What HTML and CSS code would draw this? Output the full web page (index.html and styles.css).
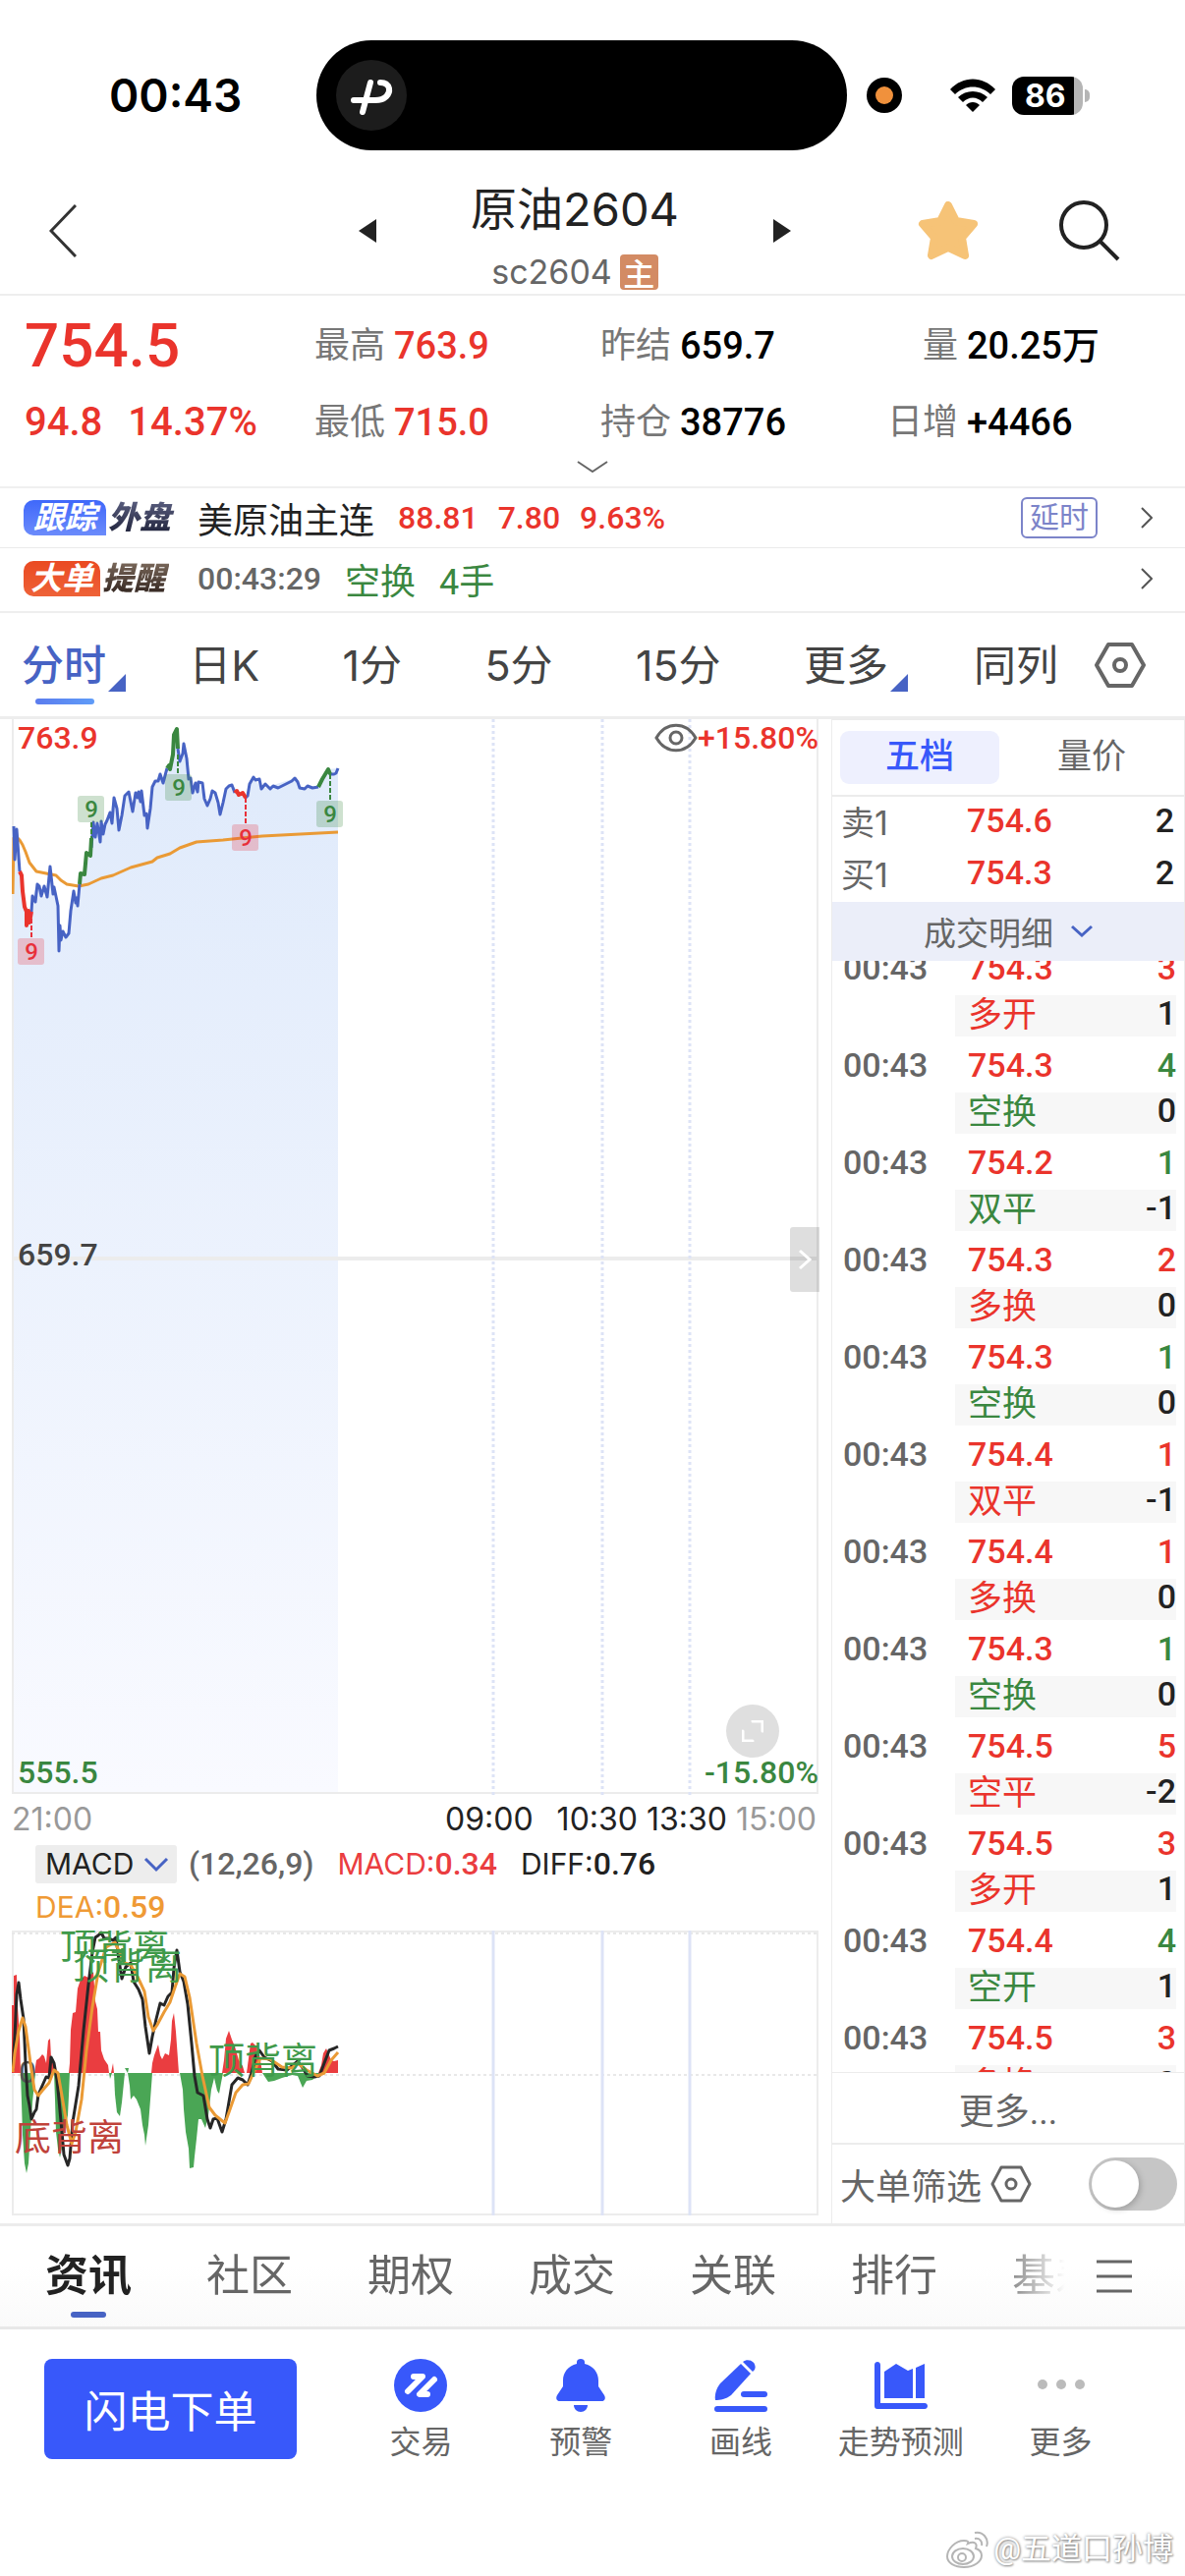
FILE: index.html
```html
<!DOCTYPE html>
<html lang="zh-CN">
<head>
  <meta charset="UTF-8">
  <meta name="viewport" content="width=device-width, initial-scale=1">
  <title>原油2604</title>
  <link rel="stylesheet" href="styles.css">
</head>
<body>
  <!-- 状态栏 -->
  <div class="status-bar">
    <span class="clock">00:43</span>
    <div class="island">
      <svg class="island-icon" viewBox="0 0 72 72" width="72" height="72">
        <circle cx="36" cy="36" r="36" fill="#1c1c1c"/>
        <g fill="none" stroke="#fff" stroke-width="6" stroke-linecap="round" stroke-linejoin="round">
          <path d="M35 23L27 53"/>
          <path d="M18 41H40C50 41 55 35 54 29C53 25 50 23 45 23"/>
        </g>
      </svg>
    </div>
    <svg class="rec-dot" viewBox="0 0 36 36" width="36" height="36">
      <circle cx="18" cy="18" r="18"/>
      <circle cx="18" cy="18" r="9" fill="#f0913c"/>
    </svg>
    <svg class="wifi" viewBox="0 0 48 35" width="48" height="35">
      <path d="M1 11C14 -3 34 -3 47 11L42 16C32 6 16 6 6 16Z"/>
      <path d="M9 19C17 11 31 11 39 19L34 24C28 18 20 18 14 24Z"/>
      <path d="M17 27C21 23 27 23 31 27L24 34Z"/>
    </svg>
    <div class="battery"><span>86</span></div>
  </div>

  <!-- 标题 -->
  <header class="nav">
    <button class="icon-btn" aria-label="返回">
      <svg viewBox="0 0 28 54" width="28" height="54"><path d="M27 1L2 27L27 53" fill="none" stroke="#333" stroke-width="3"/></svg>
    </button>
    <div class="switcher">
      <button class="icon-btn" aria-label="上一个">
        <svg viewBox="0 0 18 24" width="18" height="24"><path d="M18 0V24L0 12Z" fill="#222"/></svg>
      </button>
      <div class="title">
        <h1>原油2604</h1>
        <p>sc2604<span class="main-badge">主</span></p>
      </div>
      <button class="icon-btn" aria-label="下一个">
        <svg viewBox="0 0 18 24" width="18" height="24"><path d="M0 0V24L18 12Z" fill="#222"/></svg>
      </button>
    </div>
    <div class="nav-actions">
      <button class="icon-btn" aria-label="自选">
        <svg viewBox="0 0 62 60" width="62" height="60"><path d="M31 4L39 20L57 23L45 37L48 55L31 47L14 55L17 37L5 23L23 20Z" fill="#f6c377" stroke="#f6c377" stroke-width="8" stroke-linejoin="round"/></svg>
      </button>
      <button class="icon-btn" aria-label="搜索">
        <svg viewBox="0 0 62 62" width="62" height="62"><g fill="none" stroke="#222" stroke-width="4"><circle cx="25" cy="25" r="23"/><path d="M42 42L60 60"/></g></svg>
      </button>
    </div>
  </header>

  <!-- 行情 -->
  <section class="quote">
    <div class="quote-grid">
      <span class="last up">754.5</span>
      <span><i>最高</i><b class="up">763.9</b></span>
      <span><i>昨结</i><b>659.7</b></span>
      <span class="right-label"><i>量</i><b>20.25万</b></span>
      <span class="change up"><b>94.8</b><b>14.37%</b></span>
      <span><i>最低</i><b class="up">715.0</b></span>
      <span><i>持仓</i><b>38776</b></span>
      <span class="right-label"><i>日增</i><b>+4466</b></span>
    </div>
    <button class="icon-btn expand" aria-label="展开">
      <svg viewBox="0 0 32 12" width="32" height="12"><path d="M1 1L16 11L31 1" fill="none" stroke="#666" stroke-width="2"/></svg>
    </button>
  </section>

  <a class="strip" href="#">
    <span class="tag tag-blue"><em>跟踪</em><strong>外盘</strong></span>
    <span class="strip-name">美原油主连</span>
    <span class="num up">88.81</span>
    <span class="num up">7.80</span>
    <span class="num up">9.63%</span>
    <span class="delay">延时</span>
    <svg class="arrow" viewBox="0 0 12 22" width="12" height="22"><path d="M1 1L11 11L1 21" fill="none" stroke="#555" stroke-width="2"/></svg>
  </a>
  <a class="strip strip-last" href="#">
    <span class="tag tag-red"><em>大单</em><strong>提醒</strong></span>
    <span class="num strip-time">00:43:29</span>
    <span class="down">空换</span>
    <span class="down">4手</span>
    <svg class="arrow" viewBox="0 0 12 22" width="12" height="22"><path d="M1 1L11 11L1 21" fill="none" stroke="#555" stroke-width="2"/></svg>
  </a>

  <!-- 周期 -->
  <nav class="periods">
    <div class="period-list">
      <button class="period active has-more">分时</button>
      <button class="period">日K</button>
      <button class="period">1分</button>
      <button class="period">5分</button>
      <button class="period">15分</button>
      <button class="period has-more">更多</button>
    </div>
    <button class="period">同列</button>
    <button class="icon-btn" aria-label="设置">
      <svg viewBox="0 0 52 46" width="52" height="46"><g fill="none" stroke="#666" stroke-width="4" stroke-linejoin="round"><path d="M14 2H38L50 23L38 44H14L2 23Z"/><circle cx="26" cy="23" r="6"/></g></svg>
    </button>
  </nav>

  <main class="main">
    <section class="charts">
      <!-- 分时图 -->
      <div class="chart">
        <svg class="plot" viewBox="0 0 821 1095">
          <defs>
            <linearGradient id="fill" x1="0" y1="0" x2="0" y2="1">
              <stop offset="0" stop-color="#dfeafb"/>
              <stop offset="1" stop-color="#f9faff"/>
            </linearGradient>
          </defs>
          <path fill="url(#fill)" d="M2 1092V109L3 143L5 112L8 155L11 175L15 210L20 196L21 180L26 168L30 180L36 181L39 150L42 178L47 190L48 236L50 225L58 218L63 175L67 190L70 157L74 158L81 131L83 105L90 125L100 95L104 80L109 113L115 78L119 74L123 94L129 74L132 73L138 111L143 69L151 56L154 65L161 51L165 16L168 10L171 43L175 25L180 61L184 75L190 64L199 88L204 73L212 97L218 71L224 67L238 80L246 59L254 71L288 60L293 70L312 69L322 51L332 50V1092Z"/>
          <path class="frame" d="M1 0V1094M0 1093H821M820 0V1094"/>
          <path class="frame middle" d="M0 549H821"/>
          <path class="session" d="M490 0V1095M601 0V1095M690 0V1095"/>
          <polyline class="line avg" points="1,178 2,121 5,120 8,123 11,128 14,135 18,146 25,155 35,157 45,159 50,164 56,168 68,170 78,168 91,162 103,159 121,151 143,145 148,141 161,137 171,131 188,125 215,123 255,119 332,115"/>
          <g class="line price">
            <polyline points="2,109 3,143 5,112 6,126 8,155"/>
            <polyline points="20,196 21,180 24,186 26,168 28,170 30,180 33,170 36,181 39,150 42,178 43,171 47,190 48,236 49,210 50,225 52,216 55,222 58,218 60,195 63,175 65,187 66,182 67,190 69,168"/>
            <polyline points="81,131 83,105 85,120 87,106 90,125 91,104 93,117 95,107 97,103 100,95 102,106 104,80 107,91 109,113 112,98 115,78 119,74 123,94 126,75 128,80 129,74 131,84 132,73 135,98 137,96 138,111 141,91 143,69 146,63 149,63 151,56 154,65 158,50"/>
            <polyline points="169,30 171,43 174,35 175,25 178,40 180,61 182,60 184,75 187,65 189,74 190,64 194,65 196,81 199,88 202,81 204,73 207,75 210,85 212,97 215,85 218,71 221,68 224,67 227,75"/>
            <polyline points="238,80 240,78 242,66 246,59 248,62 252,61 254,71 258,66 263,71 266,68 271,70 275,68 281,65 285,63 288,60 291,64 293,70 298,71 301,68 306,70 312,69"/>
            <polyline points="324,56 328,56 330,55 332,50"/>
          </g>
          <g class="line price-up">
            <polyline points="8,155 10,159 11,175 13,191 15,196 15,210 17,195 18,207 20,196"/>
            <polyline points="227,75 229,73 231,77 235,75 238,80"/>
          </g>
          <g class="line price-down">
            <polyline points="69,168 70,157 74,158 76,136 80,139 81,121"/>
            <polyline points="158,50 160,47 161,51 164,36 165,16 168,10 169,30"/>
            <polyline points="312,69 316,61 322,51 324,56"/>
          </g>
          <!-- 九转标记 -->
          <g class="nine nine-red">
            <path d="M20 196V223M238 80V107"/>
            <rect x="6" y="223" width="27" height="27" rx="3"/><text x="20" y="245">9</text>
            <rect x="224" y="107" width="27" height="27" rx="3"/><text x="238" y="129">9</text>
          </g>
          <g class="nine nine-green">
            <path d="M81 105V125M169 36V56M324 56V83"/>
            <rect x="67" y="78" width="27" height="27" rx="3"/><text x="81" y="100">9</text>
            <rect x="156" y="56" width="27" height="27" rx="3"/><text x="170" y="78">9</text>
            <rect x="310" y="83" width="27" height="27" rx="3"/><text x="324" y="105">9</text>
          </g>
        </svg>
        <span class="scale scale-top up">763.9</span>
        <span class="scale scale-mid">659.7</span>
        <span class="scale scale-bottom down">555.5</span>
        <div class="scale scale-right up">
          <button class="icon-btn" aria-label="显示">
            <svg viewBox="0 0 44 30" width="44" height="30"><g fill="none" stroke="#666" stroke-width="3"><path d="M2 15C12 -2 32 -2 42 15C32 32 12 32 2 15Z"/><circle cx="22" cy="15" r="6"/></g></svg>
          </button>+15.80%
        </div>
        <span class="scale scale-right-bottom down">-15.80%</span>
        <button class="side-handle" aria-label="收起盘口">
          <svg viewBox="0 0 14 22" width="14" height="22"><path d="M2 2L12 11L2 20" fill="none" stroke="#fff" stroke-width="3"/></svg>
        </button>
        <button class="zoom-btn" aria-label="全屏">
          <svg viewBox="0 0 22 22" width="22" height="22"><path d="M11 1H21V11M1 11V21H11" fill="none" stroke="#fff" stroke-width="3" stroke-linecap="round"/></svg>
        </button>
      </div>
      <div class="axis">
        <span class="edge">21:00</span>
        <span class="open">09:00</span>
        <span>10:30</span>
        <span>13:30</span>
        <span class="edge">15:00</span>
      </div>

      <!-- MACD -->
      <div class="indicator">
        <label class="picker">
          <select aria-label="指标"><option>MACD</option></select>
          <svg viewBox="0 0 26 16" width="26" height="16"><path d="M2 2L13 13L24 2" fill="none" stroke="#4763c4" stroke-width="3"/></svg>
        </label>
        <span class="params">(12,26,9)</span>
        <span class="macd">MACD:<b>0.34</b></span>
        <span>DIFF:<b>0.76</b></span>
        <span class="dea">DEA:<b>0.59</b></span>
      </div>
      <svg class="plot" viewBox="0 0 821 290">
        <path class="frame" d="M1 0V290M0 1H821M820 0V290M0 289H821"/>
        <path class="dots" d="M0 147H821M0 3H821"/>
        <path class="session-solid" d="M490 0V290M601 0V290M690 0V290"/>
        <g class="bars-red">
          <polygon points="0,145 0,76 2,76 2,46 5,45 6,78 8,107 9,145"/>
          <polygon points="23,145 25,132 28,130 31,126 33,128 35,135 37,112 39,110 40,130 43,138 44,145"/>
          <polygon points="58,145 59,135 60,101 62,84 65,83 67,59 70,50 74,46 78,48 83,42 85,72 87,80 88,103 90,103 91,122 94,131 98,137 99,145"/>
          <polygon points="101,145 103,135 104,145"/>
          <polygon points="142,145 143,135 145,127 149,116 151,127 153,131 156,125 160,127 162,111 163,92 165,84 167,103 169,131 170,145"/>
          <polygon points="214,145 216,132 218,110 221,102 224,111 227,118 231,132 235,138 237,145"/>
          <polygon points="239,145 241,130 243,115 245,114 250,119 253,132 255,145"/>
          <polygon points="312,145 315,137 317,125 320,120 323,127 325,132 328,133 332,132 332,145"/>
        </g>
        <g class="bars-green">
          <polygon points="9,145 10,175 11,208 13,237 15,247 17,237 19,205 21,175 23,155 24,145"/>
          <polygon points="43,145 44,172 45,205 47,222 49,231 51,222 54,202 57,188 58,168 59,145"/>
          <polygon points="99,145 100,151 102,145"/>
          <polygon points="104,145 105,167 107,185 110,189 112,175 114,155 115,145"/>
          <polygon points="115,140 119,140 118,145 120,158 121,172 124,168 127,172 131,182 133,198 135,208 136,219 139,198 141,172 143,145 118,145"/>
          <polygon points="171,145 174,162 175,182 177,205 180,222 181,242 185,241 186,230 188,212 190,192 193,192 197,201 200,188 203,162 206,150 209,163 211,166 213,155 215,145"/>
          <polygon points="255,145 261,154 267,153 275,150 285,147 291,148 296,160 300,153 306,152 313,145"/>
        </g>
        <text class="zero" x="7" y="155">0</text>
        <polyline class="line diff" points="1,142 3,108 5,65 7,53 9,70 12,90 14,135 16,168 18,178 20,192 23,185 25,182 27,167 31,158 35,149 38,150 40,129 43,135 46,152 48,172 51,205 53,228 57,239 59,232 62,195 68,158 73,102 78,55 82,22 85,7 88,5 91,2 94,8 99,8 103,10 106,7 109,30 112,49 116,37 121,33 124,52 129,60 133,70 136,98 140,125 143,108 147,90 151,74 155,76 159,67 163,63 165,38 168,20 171,42 175,52 179,75 183,115 186,148 189,165 195,168 199,192 202,201 205,192 209,191 214,205 218,192 224,157 230,150 235,152 240,157 244,145 248,128 252,122 257,129 265,133 271,141 280,142 285,138 291,133 296,140 301,148 308,149 313,148 318,135 323,122 328,120 332,118"/>
        <polyline class="line avg" points="1,144 3,125 7,102 11,89 14,98 19,135 23,162 27,168 31,163 38,155 43,142 47,145 51,168 56,198 61,217 65,205 71,172 76,122 82,78 88,42 96,17 105,12 111,25 115,33 121,35 128,47 135,62 139,88 144,102 148,96 155,83 161,73 166,58 171,44 176,47 181,68 188,115 194,148 201,180 207,188 217,196 221,185 228,165 235,157 241,156 246,145 253,130 263,131 275,139 285,140 291,135 300,142 311,148 318,145 325,132 332,124"/>
        <g class="signal">
          <text x="49" y="30">顶背离</text>
          <text x="62" y="50">顶背离</text>
          <text x="200" y="146">顶背离</text>
          <text class="signal-low" x="3" y="224">底背离</text>
        </g>
      </svg>
    </section>

    <!-- 盘口 -->
    <aside class="book">
      <div class="book-tabs">
        <button class="book-tab active">五档</button>
        <button class="book-tab">量价</button>
      </div>
      <table class="levels">
        <tr><th>卖1</th><td class="up">754.6</td><td>2</td></tr>
        <tr><th>买1</th><td class="up">754.3</td><td>2</td></tr>
      </table>
      <button class="details">成交明细
        <svg viewBox="0 0 22 14" width="22" height="14"><path d="M1 2L11 11L21 2" fill="none" stroke="#4763c4" stroke-width="3"/></svg>
      </button>
      <div class="trades">
        <table>
          <tr><td>00:43</td><td class="up">754.3</td><td class="up">3</td></tr>
          <tr class="kind"><td></td><td class="up">多开</td><td>1</td></tr>
          <tr><td>00:43</td><td class="up">754.3</td><td class="down">4</td></tr>
          <tr class="kind"><td></td><td class="down">空换</td><td>0</td></tr>
          <tr><td>00:43</td><td class="up">754.2</td><td class="down">1</td></tr>
          <tr class="kind"><td></td><td class="down">双平</td><td>-1</td></tr>
          <tr><td>00:43</td><td class="up">754.3</td><td class="up">2</td></tr>
          <tr class="kind"><td></td><td class="up">多换</td><td>0</td></tr>
          <tr><td>00:43</td><td class="up">754.3</td><td class="down">1</td></tr>
          <tr class="kind"><td></td><td class="down">空换</td><td>0</td></tr>
          <tr><td>00:43</td><td class="up">754.4</td><td class="up">1</td></tr>
          <tr class="kind"><td></td><td class="up">双平</td><td>-1</td></tr>
          <tr><td>00:43</td><td class="up">754.4</td><td class="up">1</td></tr>
          <tr class="kind"><td></td><td class="up">多换</td><td>0</td></tr>
          <tr><td>00:43</td><td class="up">754.3</td><td class="down">1</td></tr>
          <tr class="kind"><td></td><td class="down">空换</td><td>0</td></tr>
          <tr><td>00:43</td><td class="up">754.5</td><td class="up">5</td></tr>
          <tr class="kind"><td></td><td class="up">空平</td><td>-2</td></tr>
          <tr><td>00:43</td><td class="up">754.5</td><td class="up">3</td></tr>
          <tr class="kind"><td></td><td class="up">多开</td><td>1</td></tr>
          <tr><td>00:43</td><td class="up">754.4</td><td class="down">4</td></tr>
          <tr class="kind"><td></td><td class="down">空开</td><td>1</td></tr>
          <tr><td>00:43</td><td class="up">754.5</td><td class="up">3</td></tr>
          <tr class="kind"><td></td><td class="up">多换</td><td>0</td></tr>
        </table>
      </div>
      <button class="more">更多...</button>
      <div class="filter">
        <label for="bigOrder">大单筛选</label>
        <svg viewBox="0 0 42 38" width="42" height="38"><g fill="none" stroke="#666" stroke-width="3" stroke-linejoin="round"><path d="M11 2H31L40 19L31 36H11L2 19Z"/><circle cx="21" cy="19" r="5"/></g></svg>
        <input class="toggle" type="checkbox" id="bigOrder">
      </div>
    </aside>
  </main>

  <!-- 资讯栏目 -->
  <nav class="sections">
    <div class="section-list">
      <a class="active" href="#">资讯</a>
      <a href="#">社区</a>
      <a href="#">期权</a>
      <a href="#">成交</a>
      <a href="#">关联</a>
      <a href="#">排行</a>
      <a href="#">基差</a>
    </div>
    <button class="icon-btn" aria-label="全部栏目">
      <svg viewBox="0 0 36 34" width="36" height="34"><path d="M0 2H36M0 17H36M0 32H36" stroke="#666" stroke-width="3"/></svg>
    </button>
  </nav>

  <!-- 底部操作 -->
  <footer class="toolbar">
    <button class="order-btn">闪电下单</button>
    <div class="tools">
      <button class="tool">
        <svg viewBox="0 0 54 54" width="54" height="54"><circle cx="27" cy="27" r="27" fill="#3858fa"/><path d="M20 18H29L14 33M41 21L26 36H34" fill="none" stroke="#fff" stroke-width="6" stroke-linecap="round" stroke-linejoin="round"/></svg>
        交易
      </button>
      <button class="tool">
        <svg viewBox="0 0 54 54" width="54" height="54" fill="#3858fa"><path d="M23 3C23 -1 31 -1 31 3V5C40 7 45 14 45 22V28L51 37C53 41 51 43 48 43H6C3 43 1 41 3 37L9 28V22C9 14 14 7 23 5Z"/><path d="M20 47H34C34 51 31 54 27 54S20 51 20 47Z"/></svg>
        预警
      </button>
      <button class="tool">
        <svg viewBox="0 0 54 54" width="54" height="54" fill="#3858fa"><path d="M27 5L37 15L17 37C12 41 6 42 1 42C0 37 2 30 6 25Z"/><path d="M29 3C35 -2 44 4 41 11L39 13Z"/><rect x="27" y="33" width="27" height="6" rx="3"/><rect x="0" y="48" width="54" height="6" rx="3"/></svg>
        画线
      </button>
      <button class="tool">
        <svg viewBox="0 0 54 54" width="54" height="54" fill="#3858fa"><path d="M0 6C0 2 6 2 6 6V45H51C55 45 55 51 51 51H3C1 51 0 50 0 48Z"/><path d="M10 13L22 5L34 12L39 10V40H10Z"/><path d="M42 9L51 5V40H42Z"/></svg>
        走势预测
      </button>
      <button class="tool">
        <svg viewBox="0 0 54 54" width="54" height="54" fill="#bbb"><circle cx="8" cy="26" r="5"/><circle cx="27" cy="26" r="5"/><circle cx="46" cy="26" r="5"/></svg>
        更多
      </button>
    </div>
  </footer>
  <div class="watermark">
    <svg viewBox="0 0 44 38" width="44" height="38"><g fill="#fff" stroke="#b5b5b5" stroke-width="2"><path d="M18 10C9 10 1 19 1 26C1 33 9 37 18 37C29 37 36 31 36 25C36 21 33 19 30 18C32 13 29 10 22 13C23 11 22 10 18 10Z"/><ellipse cx="17" cy="26" rx="11" ry="8"/><circle cx="16" cy="27" r="4"/><path d="M29 2C37 0 44 8 41 16M29 8C34 7 37 11 36 15" fill="none"/></g></svg>
    @五道口孙博
  </div>
</body>
</html>
```
FILE: styles.css
```css
* {
  box-sizing: border-box;
}

body {
  margin: 0;
  background: #fff;
  color: #222;
  font-family: Roboto, "Noto Sans CJK SC", sans-serif;
  font-size: 36px;
  overflow-x: hidden;
}

button {
  padding: 0;
  border: none;
  background: none;
  color: inherit;
  font: inherit;
  cursor: pointer;
}

a {
  color: inherit;
  text-decoration: none;
}

svg {
  display: block;
  flex: none;
}

table {
  width: 100%;
  border-collapse: collapse;
}

.up {
  color: #ea342c;
}

.down {
  color: #3a8740;
}

.icon-btn {
  display: flex;
}

/* 状态栏 */
.status-bar {
  display: flex;
  align-items: center;
  height: 168px;
  padding: 26px 104px 0 111px;
}

.clock {
  width: 211px;
  color: #000;
  font-family: Inter, sans-serif;
  font-size: 46px;
  font-weight: 600;
}

.island {
  width: 540px;
  height: 112px;
  padding: 20px;
  border-radius: 56px;
  background: #000;
}

.rec-dot {
  margin-left: 20px;
}

.wifi {
  margin-left: auto;
}

.battery {
  position: relative;
  width: 72px;
  height: 39px;
  margin-left: 16px;
  border-radius: 12px;
  background: linear-gradient(90deg, #000 87%, #b5b5b5 87%);
  color: #fff;
  font: 700 32px/39px Inter, sans-serif;
  padding-left: 13px;
}

.battery::after {
  content: "";
  position: absolute;
  right: -7px;
  top: 13px;
  width: 5px;
  height: 13px;
  border-radius: 0 5px 5px 0;
  background: #b5b5b5;
}

/* 标题 */
.nav {
  display: flex;
  align-items: center;
  height: 133px;
  padding: 3px 66px 0 50px;
  border-bottom: 2px solid #eee;
}

.switcher {
  display: flex;
  align-items: center;
  justify-content: space-between;
  width: 440px;
  margin-left: auto;
  margin-right: 129px;
}

.title {
  text-align: center;
}

.title h1 {
  margin: 0;
  font: 400 47px/84px Inter, "Noto Sans CJK SC", sans-serif;
}

.title p {
  display: flex;
  align-items: center;
  justify-content: center;
  gap: 8px;
  margin: 0;
  color: #666;
  font: 400 34px/44px Inter, sans-serif;
}

.main-badge {
  width: 39px;
  border-radius: 4px;
  background: #d38b64;
  color: #fff;
  font: 500 32px/36px "Noto Sans CJK SC", sans-serif;
}

.nav-actions {
  display: flex;
  align-items: center;
  gap: 82px;
}

/* 行情 */
.quote {
  height: 196px;
  padding-top: 12px;
  border-bottom: 2px solid #f0f0f0;
}

.quote-grid {
  display: grid;
  grid-template-columns: 295fr 291fr 292fr 303fr;
  padding-left: 25px;
  line-height: 78px;
  white-space: nowrap;
}

.quote-grid > span {
  display: flex;
}

.quote-grid i {
  width: 72px;
  margin-right: 9px;
  color: #777;
  font-style: normal;
}

.quote-grid b {
  color: #000;
  font-size: 38px;
  font-weight: 500;
}

.quote-grid .up,
.quote-grid .up b {
  color: #ea342c;
}

.quote-grid .last {
  font-size: 62px;
  font-weight: 500;
}

.quote-grid .change b {
  font-size: 40px;
}

.change {
  gap: 26px;
}

.right-label i {
  text-align: right;
}

.expand {
  margin: 0 auto;
}

/* 外盘、大单提醒 */
.strip {
  display: flex;
  align-items: center;
  gap: 20px;
  height: 61px;
  padding: 0 33px 0 24px;
  border-bottom: 1px solid #eaeaea;
  white-space: nowrap;
}

.strip-name {
  margin-right: 4px;
}

.strip-last {
  gap: 24px;
  height: 66px;
  padding-bottom: 2px;
  border-bottom: 2px solid #eee;
}

.tag {
  display: flex;
  flex: none;
  gap: 2px;
  width: 157px;
  font-size: 32px;
  line-height: 36px;
  font-style: italic;
  font-weight: 700;
}

.strip-last .tag {
  width: 153px;
}

.tag em {
  width: 84px;
  border-radius: 10px 10px 0 10px;
  color: #fff;
  text-align: center;
}

.tag strong {
  padding-right: 4px;
  background-clip: text;
  color: transparent;
}

.tag-blue em {
  background: linear-gradient(#3f68fa, #6b8bfb);
}

.tag-blue strong {
  background-image: linear-gradient(#5b5f80, #1d2038);
}

.tag-red em {
  width: 78px;
  background: linear-gradient(#ea4a22, #ee6238);
}

.tag-red strong {
  background-image: linear-gradient(#7c6a5c, #2e211c);
}

.num {
  font-size: 32px;
  font-weight: 500;
}

.strip-time {
  color: #666;
}

.delay {
  width: 78px;
  margin-left: auto;
  border: 2px solid #7c84c9;
  border-radius: 6px;
  color: #7c84c9;
  font-size: 30px;
  line-height: 38px;
  text-align: center;
}

.arrow {
  margin-left: 24px;
}

.strip-last .arrow {
  margin-left: auto;
}

/* 周期 */
.periods {
  display: flex;
  align-items: center;
  height: 108px;
  padding: 0 40px 0 22px;
  border-bottom: 3px solid #ededed;
}

.period-list {
  display: flex;
  flex: 1;
  justify-content: space-between;
  margin-right: 87px;
}

.period {
  position: relative;
  color: #444;
  font: 400 43px/106px Inter, "Noto Sans CJK SC", sans-serif;
}

.period + .icon-btn {
  margin-left: 37px;
}

.period.active {
  color: #4763c4;
  font-weight: 500;
}

.has-more::after {
  content: "";
  position: absolute;
  right: -20px;
  bottom: 26px;
  border-left: 18px solid transparent;
  border-bottom: 18px solid #4763c4;
}

.period.active::before {
  content: "";
  position: absolute;
  left: 14px;
  bottom: 13px;
  width: 60px;
  height: 6px;
  border-radius: 3px;
  background: linear-gradient(90deg, #5b7cee, #5f9cf8);
}

/* 图表 */
.main {
  display: grid;
  grid-template-columns: 1fr 360px;
  gap: 13px;
  border-bottom: 3px solid #ececec;
}

.charts {
  padding: 0 0 8px 12px;
}

.chart {
  position: relative;
}

.plot {
  width: 100%;
}

.frame {
  fill: none;
  stroke: #ececec;
  stroke-width: 2;
}

.middle {
  stroke-width: 4;
}

.session {
  stroke: #dde3f6;
  stroke-width: 3;
  stroke-dasharray: 3 3;
}

.session-solid {
  stroke: #dde3f6;
  stroke-width: 3;
}

.dots {
  stroke: #e8e8e8;
  stroke-width: 2;
  stroke-dasharray: 3 3;
}

.line {
  fill: none;
  stroke-width: 3;
  stroke-linejoin: round;
}

.price {
  stroke: #4763c4;
}

.price-up {
  stroke: #ea342c;
  stroke-width: 4;
}

.price-down {
  stroke: #3a8740;
  stroke-width: 4;
}

.avg {
  stroke: #ea9a35;
}

.diff {
  stroke: #262626;
}

.nine text {
  font-size: 24px;
  font-weight: 500;
  text-anchor: middle;
}

.nine path {
  stroke-width: 2;
  stroke-dasharray: 5 2;
}

.nine rect {
  fill-opacity: 0.25;
}

.nine-red {
  fill: #e8303a;
}

.nine-red path {
  stroke: #e8303a;
}

.nine-green {
  fill: #3a8740;
}

.nine-green path {
  stroke: #3a8740;
}

.bars-red {
  fill: #ea3d40;
}

.bars-green {
  fill: #4aa655;
}

.zero {
  fill: #555;
  font-size: 32px;
}

.signal {
  fill: #3f9a4a;
  font-size: 37px;
}

.signal-low {
  fill: #c0423a;
}

.scale {
  position: absolute;
  font-size: 32px;
  font-weight: 500;
  line-height: 40px;
}

.scale-top {
  left: 6px;
  top: -1px;
}

.scale-mid {
  left: 6px;
  top: 49%;
  margin-top: -12px;
  color: #444;
}

.scale-bottom {
  left: 6px;
  bottom: 3px;
}

.scale-right {
  display: flex;
  align-items: center;
  right: 0;
  top: -1px;
}

.scale-right-bottom {
  right: 0;
  bottom: 3px;
}

.side-handle {
  display: flex;
  align-items: center;
  justify-content: center;
  position: absolute;
  right: -1px;
  top: 517px;
  width: 30px;
  height: 66px;
  border-radius: 3px 0 0 3px;
  background: rgba(0, 0, 0, 0.13);
}

.zoom-btn {
  display: flex;
  align-items: center;
  justify-content: center;
  position: absolute;
  right: 40px;
  bottom: 38px;
  width: 54px;
  height: 54px;
  border-radius: 50%;
  background: #dfdfdf;
}

.axis {
  display: flex;
  gap: 9px;
  padding-right: 2px;
  font: 400 32px/50px Inter, sans-serif;
  height: 51px;
}

.edge {
  color: #999;
}

.open {
  margin-left: auto;
  margin-right: 15px;
}

.indicator {
  display: flex;
  flex-wrap: wrap;
  column-gap: 24px;
  padding: 0 120px 0 24px;
  font: 400 30px/39px Inter, sans-serif;
}

.indicator b,
.params {
  font-family: Roboto, sans-serif;
  font-size: 32px;
  font-weight: 500;
}

.picker {
  display: flex;
  align-items: center;
  width: 144px;
  height: 39px;
  padding: 0 8px 0 10px;
  border-radius: 3px;
  background: #ededed;
}

.picker select {
  flex: 1;
  min-width: 0;
  padding: 0;
  border: none;
  background: none;
  color: #222;
  font: inherit;
  appearance: none;
}

.params {
  margin-left: -12px;
  color: #666;
}

.macd {
  color: #ea3d40;
}

.dea {
  color: #ef9a35;
  line-height: 48px;
}

/* 盘口 */
.book {
  display: flex;
  flex-direction: column;
  border: 1px solid #ececec;
  border-bottom: none;
}

.book-tabs {
  display: flex;
  height: 78px;
  padding: 11px 0 11px 8px;
  border-bottom: 2px solid #ececec;
}

.book-tab {
  flex: 1;
  border-radius: 9px;
  color: #666;
  font-size: 35px;
  line-height: 52px;
}

.book-tab.active {
  flex: 0 0 162px;
  background: #eef0fe;
  color: #3858fa;
  font-weight: 500;
}

.levels {
  height: 107px;
}

.levels th {
  width: 137px;
  padding: 0 0 0 9px;
  color: #666;
  font: 400 34px/50px Inter, "Noto Sans CJK SC", sans-serif;
  text-align: left;
}

.levels td {
  padding: 0 10px 6px 0;
  font-size: 34px;
  font-weight: 500;
  line-height: 44px;
}

.levels td:last-child,
.trades td:last-child {
  text-align: right;
}

.details {
  display: flex;
  align-items: center;
  justify-content: center;
  gap: 18px;
  height: 60px;
  background: #ebeef9;
  color: #666;
  font-size: 33px;
}

.trades {
  flex: 1;
  contain: size;
  overflow: hidden;
}

.trades table {
  width: 350px;
  margin-top: -22px;
  table-layout: fixed;
}

.trades tr {
  height: 57px;
}

.trades .kind {
  height: 42px;
}

.trades td {
  padding: 0;
  font-size: 34px;
  font-weight: 500;
  line-height: 42px;
}

.trades td:first-child {
  width: 125px;
  padding-left: 11px;
  color: #666;
}

.trades td:nth-child(2) {
  padding-left: 13px;
}

.trades .kind td {
  font-size: 35px;
  font-weight: 400;
}

.trades .kind td:last-child {
  padding-bottom: 6px;
  font-size: 34px;
  font-weight: 500;
  line-height: 36px;
}

.trades .kind td + td {
  background: #f7f7f7;
}

.more {
  height: 74px;
  border-top: 1px solid #ececec;
  border-bottom: 2px solid #ececec;
  color: #666;
}

.filter {
  display: flex;
  align-items: center;
  gap: 9px;
  height: 80px;
  padding: 0 7px 0 8px;
  color: #666;
}

.toggle {
  width: 90px;
  height: 54px;
  margin: 0 0 0 auto;
  padding: 3px;
  border-radius: 27px;
  background: #c6c6c6;
  appearance: none;
}

.toggle::before {
  content: "";
  display: block;
  width: 48px;
  height: 48px;
  border-radius: 50%;
  background: #fff;
  box-shadow: 2px 2px 6px rgba(0, 0, 0, 0.2);
}

/* 资讯栏目 */
.sections {
  display: flex;
  align-items: center;
  height: 105px;
  padding: 0 54px 0 46px;
  border-bottom: 3px solid #e8e8e8;
  background: linear-gradient(#fff 40%, #fafafa);
}

.section-list {
  display: flex;
  flex: 1;
  gap: 76px;
  margin-right: 32px;
  overflow: hidden;
  color: #666;
  font-size: 44px;
  line-height: 106px;
  white-space: nowrap;
  mask-image: linear-gradient(90deg, #000 93%, transparent);
}

.section-list .active {
  position: relative;
  color: #222;
  font-weight: 700;
}

.section-list .active::after {
  content: "";
  position: absolute;
  left: 26px;
  bottom: 11px;
  width: 36px;
  height: 6px;
  border-radius: 3px;
  background: #4763c4;
}

/* 底部操作 */
.toolbar {
  display: flex;
  padding: 30px 45px 0;
}

.order-btn {
  width: 257px;
  height: 102px;
  border-radius: 8px;
  background: #3858fa;
  color: #fff;
  font-size: 44px;
}

.tools {
  display: grid;
  flex: 1;
  grid-template-columns: repeat(5, 1fr);
  margin-left: 45px;
}

.tool {
  display: flex;
  flex-direction: column;
  align-items: center;
  gap: 8px;
  color: #666;
  font-size: 32px;
  line-height: 46px;
  white-space: nowrap;
}

.watermark {
  display: flex;
  align-items: center;
  justify-content: flex-end;
  gap: 4px;
  padding: 66px 12px 2px;
  color: #fff;
  font-size: 31px;
  line-height: 40px;
  text-shadow: 0 0 3px #888, 1px 1px 2px #999;
}
```
